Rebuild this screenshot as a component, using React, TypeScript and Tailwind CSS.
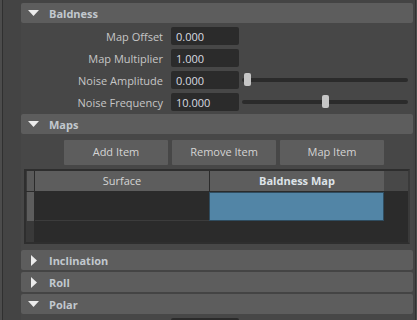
import React from "react";

const font = { fontFamily: '"Open Sans", "Noto Sans", sans-serif' };

function Header({ title, open }: { title: string; open: boolean }) {
  return (
    <div className="h-[20px] shrink-0 rounded-[2px] bg-[#5d5d5d] flex items-center">
      <div className="w-[28px] shrink-0 flex justify-start">
        {open ? (
          <svg width="11" height="6" viewBox="0 0 11 6" className="ml-[7px]">
            <polygon points="0,0 11,0 5.5,6" fill="#ececec" />
          </svg>
        ) : (
          <svg width="6" height="11" viewBox="0 0 6 11" className="ml-[10px]">
            <polygon points="0,0 6,5.5 0,11" fill="#ececec" />
          </svg>
        )}
      </div>
      <span className="text-[11px] font-bold text-[#c2c8ce] leading-none">{title}</span>
    </div>
  );
}

function Slider({ pct }: { pct: number }) {
  return (
    <div className="relative ml-[3px] w-[166px] h-[18px] flex items-center">
      <div className="w-full h-[4px] rounded-full bg-[#2b2b2b]" />
      <div
        className="absolute top-[2px] w-[7px] h-[13px] rounded-[2px] bg-[#c6c6c6]"
        style={{ left: `${2 + pct * 1.56}px` }}
      />
    </div>
  );
}

function Row({ label, value, slider }: { label: string; value: string; slider?: number }) {
  return (
    <div className="h-[18px] flex items-center">
      <div className="w-[142px] text-right text-[11px] text-[#c6c6c6] leading-none">{label}</div>
      <div className="ml-[8px] w-[68px] h-[18px] rounded-[2px] bg-[#2b2b2b] flex items-center pl-[5px] text-[11px] text-[#d8dbe0] leading-none">
        {value}
      </div>
      {slider !== undefined && <Slider pct={slider} />}
    </div>
  );
}

function Button({ children }: { children: React.ReactNode }) {
  return (
    <div className="w-[104px] h-[25px] bg-[#5d5d5d] rounded-[1px] flex items-center justify-center text-[11px] text-[#d4d4d4]">
      {children}
    </div>
  );
}

export default function App() {
  return (
    <div className="w-[417px] h-[320px] overflow-hidden bg-[#444444] flex" style={font}>
      <div className="w-[2px] shrink-0 bg-[#4c4c4c]" />
      <div className="w-[1px] shrink-0 bg-[#303030]" />
      <div className="flex-1 flex flex-col pl-[18px] pr-[2px] pt-[3px]">
        <Header title="Baldness" open />
        <div className="flex flex-col gap-[4px] pt-[4px] pb-[3px] bg-[#474747]">
          <Row label="Map Offset" value="0.000" />
          <Row label="Map Multiplier" value="1.000" />
          <Row label="Noise Amplitude" value="0.000" slider={0} />
          <Row label="Noise Frequency" value="10.000" slider={50} />
        </div>
        <Header title="Maps" open />
        <div className="flex flex-col pt-[6px] pb-[6px] bg-[#474747]">
          <div className="flex gap-[4px] pl-[43px]">
            <Button>Add Item</Button>
            <Button>Remove Item</Button>
            <Button>Map Item</Button>
          </div>
          <div className="mt-[4px] ml-[3px] w-[386px] h-[75px] border-2 border-[#2e2e2e] border-r-[#3a3a3a] bg-[#2b2b2b] flex flex-col">
            <div className="h-[20px] flex shrink-0">
              <div className="w-[8px] bg-[#5a5a5a] border-l border-[#3a3a3a]" />
              <div className="w-[1px] bg-[#2b2b2b]" />
              <div className="w-[174px] bg-[#5d5d5d] flex items-center justify-center text-[11px] text-[#d4d4d4]">
                Surface
              </div>
              <div className="w-[1px] bg-[#2b2b2b]" />
              <div className="w-[174px] bg-[#5d5d5d] flex items-center justify-center text-[11px] font-bold text-[#dde3e8]">
                Baldness Map
              </div>
              <div className="flex-1 bg-[#484848]" />
            </div>
            <div className="h-[1px] bg-[#2b2b2b] shrink-0" />
            <div className="h-[29px] flex shrink-0">
              <div className="w-[8px] bg-[#5d5d5d] border-l border-[#3a3a3a]" />
              <div className="w-[1px] bg-[#2b2b2b]" />
              <div className="w-[174px] bg-[#2b2b2b] border-b border-[#3c3c3c]" />
              <div className="w-[175px] bg-[#5285a6] border border-[#2f4c5f]" />
              <div className="flex-1" />
            </div>
            <div className="flex-1 flex">
              <div className="w-[8px] bg-[#393939]" />
            </div>
          </div>
        </div>
        <div className="flex flex-col gap-[2px]">
          <Header title="Inclination" open={false} />
          <Header title="Roll" open={false} />
          <Header title="Polar" open />
        </div>
        <div className="pt-[4px] bg-[#474747] flex">
          <div className="ml-[150px] w-[68px] h-[18px] rounded-[2px] bg-[#2b2b2b]" />
        </div>
      </div>
      <div className="w-[1px] shrink-0 bg-[#333333]" />
      <div className="w-[1px] shrink-0 bg-[#4c4c4c]" />
    </div>
  );
}
